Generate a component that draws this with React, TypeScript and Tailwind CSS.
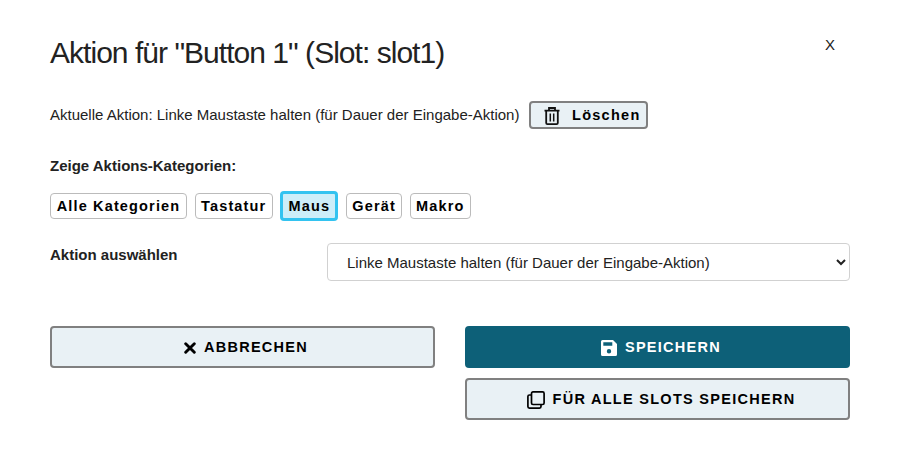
import React, { useState } from "react";

const categories = [
  { name: "Alle Kategorien", width: "w-[137px]" },
  { name: "Tastatur", width: "w-[78px]" },
  { name: "Maus", width: "w-[58px]" },
  { name: "Gerät", width: "w-[56px]" },
  { name: "Makro", width: "w-[61px]" },
];

function TrashIcon() {
  return (
    <svg className="mt-[2px] h-[18px] w-[16px] shrink-0" viewBox="0 0 16 18" fill="none" stroke="#111" strokeWidth="1.8">
      <path d="M.5 3.700h15M5 3.400V1h6v2.400M2.200 3.800v12.100q0 1.200 1.200 1.200h9.200q1.200 0 1.200-1.200V3.800" />
      <path d="M6.300 6.500v8M9.700 6.500v8" strokeWidth="1.500" />
    </svg>
  );
}

function CloseIcon() {
  return (
    <svg className="h-3 w-3 shrink-0" viewBox="0 0 12 12" stroke="#000" strokeWidth="2.9" strokeLinecap="round">
      <path d="M1.7 1.7l8.600 8.600M10.300 1.700l-8.600 8.600" />
    </svg>
  );
}

function SaveIcon() {
  return (
    <svg className="h-4 w-4 shrink-0" viewBox="0 0 16 16" fill="#fff" fillRule="evenodd">
      <path d="M1.5 0H12l4 4v10.500q0 1.500-1.500 1.500h-13Q0 16 0 14.500V1.500Q0 0 1.500 0zM2.300 2.300v3.500h9V2.300zM8 9.100a2.200 2.200 0 1 0 0 4.400 2.200 2.200 0 0 0 0-4.400z" />
    </svg>
  );
}

function CopyIcon() {
  return (
    <svg className="h-[18px] w-[18px] shrink-0" viewBox="0 0 18 18" fill="none" stroke="#000" strokeWidth="1.700">
      <rect x="4.500" y="0.900" width="12.600" height="12.600" rx="1.500" />
      <path d="M4.500 4H2.400Q.9 4 .9 5.500v10.100q0 1.500 1.500 1.500h10.100q1.500 0 1.500-1.500v-2.100" />
    </svg>
  );
}

export default function App() {
  const [active, setActive] = useState("Maus");
  return (
    <main className="h-[452px] w-[901px] bg-white pl-[50px] pr-[51px] pt-[34px] font-['Liberation_Sans',Arial,sans-serif] text-[15px] leading-6 text-[#222]">
      <header className="flex h-9 items-start justify-between">
        <h1 className="pt-px text-[30px] leading-9 tracking-[-0.97px]">Aktion für "Button 1" (Slot: slot1)</h1>
        <button className="mr-[15px] mt-[-1px] leading-6">X</button>
      </header>

      <div className="mt-[31px] flex h-7 items-center">
        <span>Aktuelle Aktion: Linke Maustaste halten (für Dauer der Eingabe-Aktion)</span>
        <button className="ml-auto mr-[202px] flex h-7 w-[119px] items-center rounded-[4px] border-2 border-[#808080] bg-[#e9f1f5] pl-[13px] text-[14.5px] font-bold tracking-[1.270px] text-black">
          <TrashIcon />
          <span className="ml-3">Löschen</span>
        </button>
      </div>

      <p className="mt-[25px] font-bold">Zeige Aktions-Kategorien:</p>

      <div className="mt-[13px] flex h-[30px] items-center gap-[7.7px]">
        {categories.map(({ name, width }) => (
          <button
            key={name}
            onClick={() => setActive(name)}
            className={
              "flex shrink-0 items-center justify-center whitespace-nowrap rounded-[4px] text-[14.5px] font-bold tracking-[1.150px] text-black " +
              width +
              (name === active
                ? " h-[30px] border-[3px] border-[#33c3f0] bg-[#cdeef9]"
                : " h-[26px] border border-[#bbb] bg-white")
            }
          >
            {name}
          </button>
        ))}
      </div>

      <div className="mt-[22px] flex h-[38px]">
        <label htmlFor="action" className="w-[277px] font-bold">Aktion auswählen</label>
        <select id="action" className="h-[38px] w-[523px] rounded-[4px] border border-[#d1d1d1] bg-white pl-[15px] leading-6">
          <option>Linke Maustaste halten (für Dauer der Eingabe-Aktion)</option>
        </select>
      </div>

      <div className="mt-[45px] grid grid-cols-2 items-start gap-x-[30px] text-[14.5px] font-bold tracking-[1.280px] text-black">
        <button className="flex h-[42px] items-center justify-center gap-2 rounded-[4px] border-2 border-[#808080] bg-[#e9f1f5] pl-[7px]">
          <span className="pt-0.5"><CloseIcon /></span>
          ABBRECHEN
        </button>
        <div className="flex flex-col gap-[10px]">
          <button className="flex h-[42px] items-center justify-center gap-2 rounded-[4px] bg-[#0d6078] pl-[7px] text-white">
            <span className="pt-0.5"><SaveIcon /></span>
            SPEICHERN
          </button>
          <button className="flex h-[42px] items-center justify-center gap-2 rounded-[4px] border-2 border-[#808080] bg-[#e9f1f5] pl-[7px]">
            <span className="pt-0.5"><CopyIcon /></span>
            FÜR ALLE SLOTS SPEICHERN
          </button>
        </div>
      </div>
    </main>
  );
}
